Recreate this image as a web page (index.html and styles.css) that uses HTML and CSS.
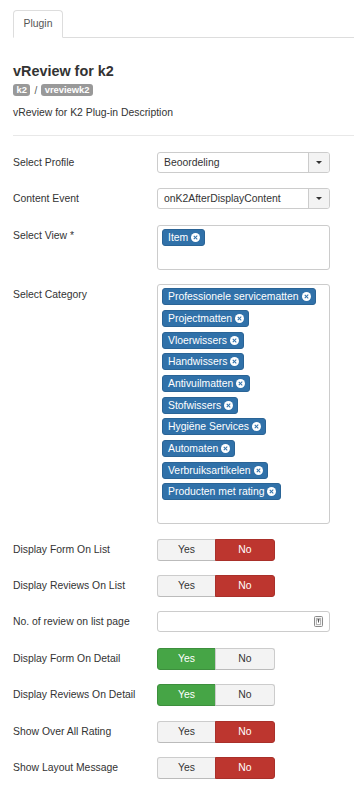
FILE: index.html
```html
<!DOCTYPE html>
<html lang="en">
<head>
  <meta charset="UTF-8">
  <title>Plugin: vReview for k2</title>
  <meta name="viewport" content="width=device-width, initial-scale=1.0">
  <link rel="stylesheet" href="styles.css">
</head>
<body>

  <!-- Tabs -->
  <ul class="nav-tabs">
    <li class="tab active">Plugin</li>
  </ul>

  <div class="plugin-head">
    <h2 class="plugin-title">vReview for k2</h2>
    <div class="plugin-tags">
      <span class="badge">k2</span>
      <span class="sep">/</span>
      <span class="badge">vreviewk2</span>
    </div>
    <p class="plugin-desc">vReview for K2 Plug-in Description</p>
  </div>

  <hr class="divider">

  <form class="form">
    <div class="control-group">
      <label class="control-label">Select Profile</label>
      <div class="select">
        <span class="select-value">Beoordeling</span>
        <span class="select-arrow"><i class="caret"></i></span>
      </div>
    </div>

    <div class="control-group">
      <label class="control-label">Content Event</label>
      <div class="select">
        <span class="select-value">onK2AfterDisplayContent</span>
        <span class="select-arrow"><i class="caret"></i></span>
      </div>
    </div>

    <div class="control-group">
      <label class="control-label">Select View *</label>
      <div class="choices choices-view">
        <span class="choice">Item <i class="choice-close"></i></span>
      </div>
    </div>

    <div class="control-group">
      <label class="control-label">Select Category</label>
      <div class="choices choices-category">
        <span class="choice">Professionele servicematten <i class="choice-close"></i></span>
        <span class="choice">Projectmatten <i class="choice-close"></i></span>
        <span class="choice">Vloerwissers <i class="choice-close"></i></span>
        <span class="choice">Handwissers <i class="choice-close"></i></span>
        <span class="choice">Antivuilmatten <i class="choice-close"></i></span>
        <span class="choice">Stofwissers <i class="choice-close"></i></span>
        <span class="choice">Hygiëne Services <i class="choice-close"></i></span>
        <span class="choice">Automaten <i class="choice-close"></i></span>
        <span class="choice">Verbruiksartikelen <i class="choice-close"></i></span>
        <span class="choice">Producten met rating <i class="choice-close"></i></span>
      </div>
    </div>

    <div class="control-group">
      <label class="control-label">Display Form On List</label>
      <div class="btn-group">
        <span class="btn">Yes</span>
        <span class="btn btn-danger">No</span>
      </div>
    </div>

    <div class="control-group">
      <label class="control-label">Display Reviews On List</label>
      <div class="btn-group">
        <span class="btn">Yes</span>
        <span class="btn btn-danger">No</span>
      </div>
    </div>

    <div class="control-group">
      <label class="control-label">No. of review on list page</label>
      <div class="input">
        <svg class="input-icon" width="9" height="11" viewBox="0 0 9 11">
          <rect x="0.5" y="0.5" width="8" height="10" rx="1" fill="#f4f4f4" stroke="#8a8a8a"/>
          <rect x="2.5" y="2.5" width="4" height="6" fill="#fff" stroke="#b5b5b5"/>
          <path d="M4.5 3 V6.5 M3.3 4.3 L4.5 3 L5.7 4.3" stroke="#555" fill="none"/>
        </svg>
      </div>
    </div>

    <div class="control-group">
      <label class="control-label">Display Form On Detail</label>
      <div class="btn-group">
        <span class="btn btn-success">Yes</span>
        <span class="btn">No</span>
      </div>
    </div>

    <div class="control-group">
      <label class="control-label">Display Reviews On Detail</label>
      <div class="btn-group">
        <span class="btn btn-success">Yes</span>
        <span class="btn">No</span>
      </div>
    </div>

    <div class="control-group">
      <label class="control-label">Show Over All Rating</label>
      <div class="btn-group">
        <span class="btn">Yes</span>
        <span class="btn btn-danger">No</span>
      </div>
    </div>

    <div class="control-group">
      <label class="control-label">Show Layout Message</label>
      <div class="btn-group">
        <span class="btn">Yes</span>
        <span class="btn btn-danger">No</span>
      </div>
    </div>
  </form>

</body>
</html>
```

FILE: styles.css
```css
* {
  margin: 0;
  padding: 0;
  box-sizing: border-box;
}

body {
  font-family: "Liberation Sans", Arial, sans-serif;
  font-size: 10.4px;
  color: #333;
  background: #fff;
}

/* tabs */
.nav-tabs {
  list-style: none;
  display: flex;
  margin: 10px 0 0 13px;
  border-bottom: 1px solid #ddd;
}

.tab {
  width: 50px;
  height: 28px;
  margin-bottom: -1px;
  line-height: 26px;
  text-align: center;
  color: #555;
  background: #fff;
  border: 1px solid #ddd;
  border-bottom-color: #fff;
  border-radius: 4px 4px 0 0;
}

/* plugin header */
.plugin-head {
  padding: 24px 0 0 13px;
}

.plugin-title {
  font-size: 14.4px;
  font-weight: bold;
  line-height: 18px;
  color: #333;
}

.plugin-tags {
  display: flex;
  align-items: center;
  gap: 4px;
  margin-top: 4px;
  height: 12px;
}

.badge {
  display: inline-block;
  height: 12px;
  padding: 0 3.5px;
  line-height: 12px;
  font-size: 9.4px;
  font-weight: bold;
  color: #fff;
  background: #999;
  border-radius: 3px;
}

.sep {
  color: #555;
  font-size: 10px;
}

.plugin-desc {
  margin-top: 10px;
  line-height: 14px;
}

.divider {
  border: none;
  border-top: 1px solid #e8e8e8;
  margin: 15px 0 0 13px;
}

/* form rows */
.form {
  padding: 16px 0 20px 13px;
}

.control-group {
  display: grid;
  grid-template-columns: 144px 173px;
  align-items: start;
  margin-bottom: 14.4px;
}

.control-label {
  line-height: 22px;
  color: #333;
}

/* select box */
.select {
  display: flex;
  height: 21px;
  border: 1px solid #ccc;
  border-radius: 3px;
  background: #fff;
  overflow: hidden;
}

.select-value {
  flex: 1;
  padding-left: 6px;
  line-height: 19px;
}

.select-arrow {
  width: 21px;
  display: flex;
  align-items: center;
  justify-content: center;
  background: #f3f3f3;
  border-left: 1px solid #ccc;
}

.caret {
  width: 0;
  height: 0;
  border-left: 3px solid transparent;
  border-right: 3px solid transparent;
  border-top: 3px solid #333;
}

/* multi select choices */
.choices {
  display: flex;
  flex-direction: column;
  align-items: flex-start;
  gap: 4.7px;
  padding: 3px 4px;
  border: 1px solid #ccc;
  border-radius: 3px;
  background: #fff;
}

.choices-view {
  height: 45px;
}

.choices-category {
  height: 240px;
}

.choice {
  display: inline-flex;
  align-items: center;
  gap: 3px;
  height: 17px;
  padding: 0 4px 0 5px;
  color: #fff;
  background: #3071a9;
  border: 1px solid #2a6496;
  border-radius: 3px;
  white-space: nowrap;
}

.choice-close {
  position: relative;
  width: 9px;
  height: 9px;
  border-radius: 50%;
  background: #fff;
}

.choice-close::before,
.choice-close::after {
  content: "";
  position: absolute;
  left: 4px;
  top: 2px;
  width: 1.2px;
  height: 5px;
  background: #3071a9;
  transform: rotate(45deg);
}

.choice-close::after {
  transform: rotate(-45deg);
}

/* yes / no toggles */
.btn-group {
  display: flex;
  height: 22px;
}

.btn {
  width: 60px;
  line-height: 20px;
  text-align: center;
  color: #333;
  background: #f3f3f3;
  border: 1px solid #ccc;
  border-bottom-color: #bbb;
}

.btn:first-child {
  width: 59px;
  border-radius: 3px 0 0 3px;
}

.btn:last-child {
  border-radius: 0 3px 3px 0;
  margin-left: -1px;
}

.btn-danger {
  color: #fff;
  background: #bd362f;
  border-color: #a9302a;
}

.btn-success {
  color: #fff;
  background: #46a546;
  border-color: #3d8f3d;
}

/* number input */
.input {
  display: flex;
  align-items: center;
  justify-content: flex-end;
  height: 21px;
  padding-right: 6px;
  border: 1px solid #ccc;
  border-radius: 3px;
  background: #fff;
}
```
